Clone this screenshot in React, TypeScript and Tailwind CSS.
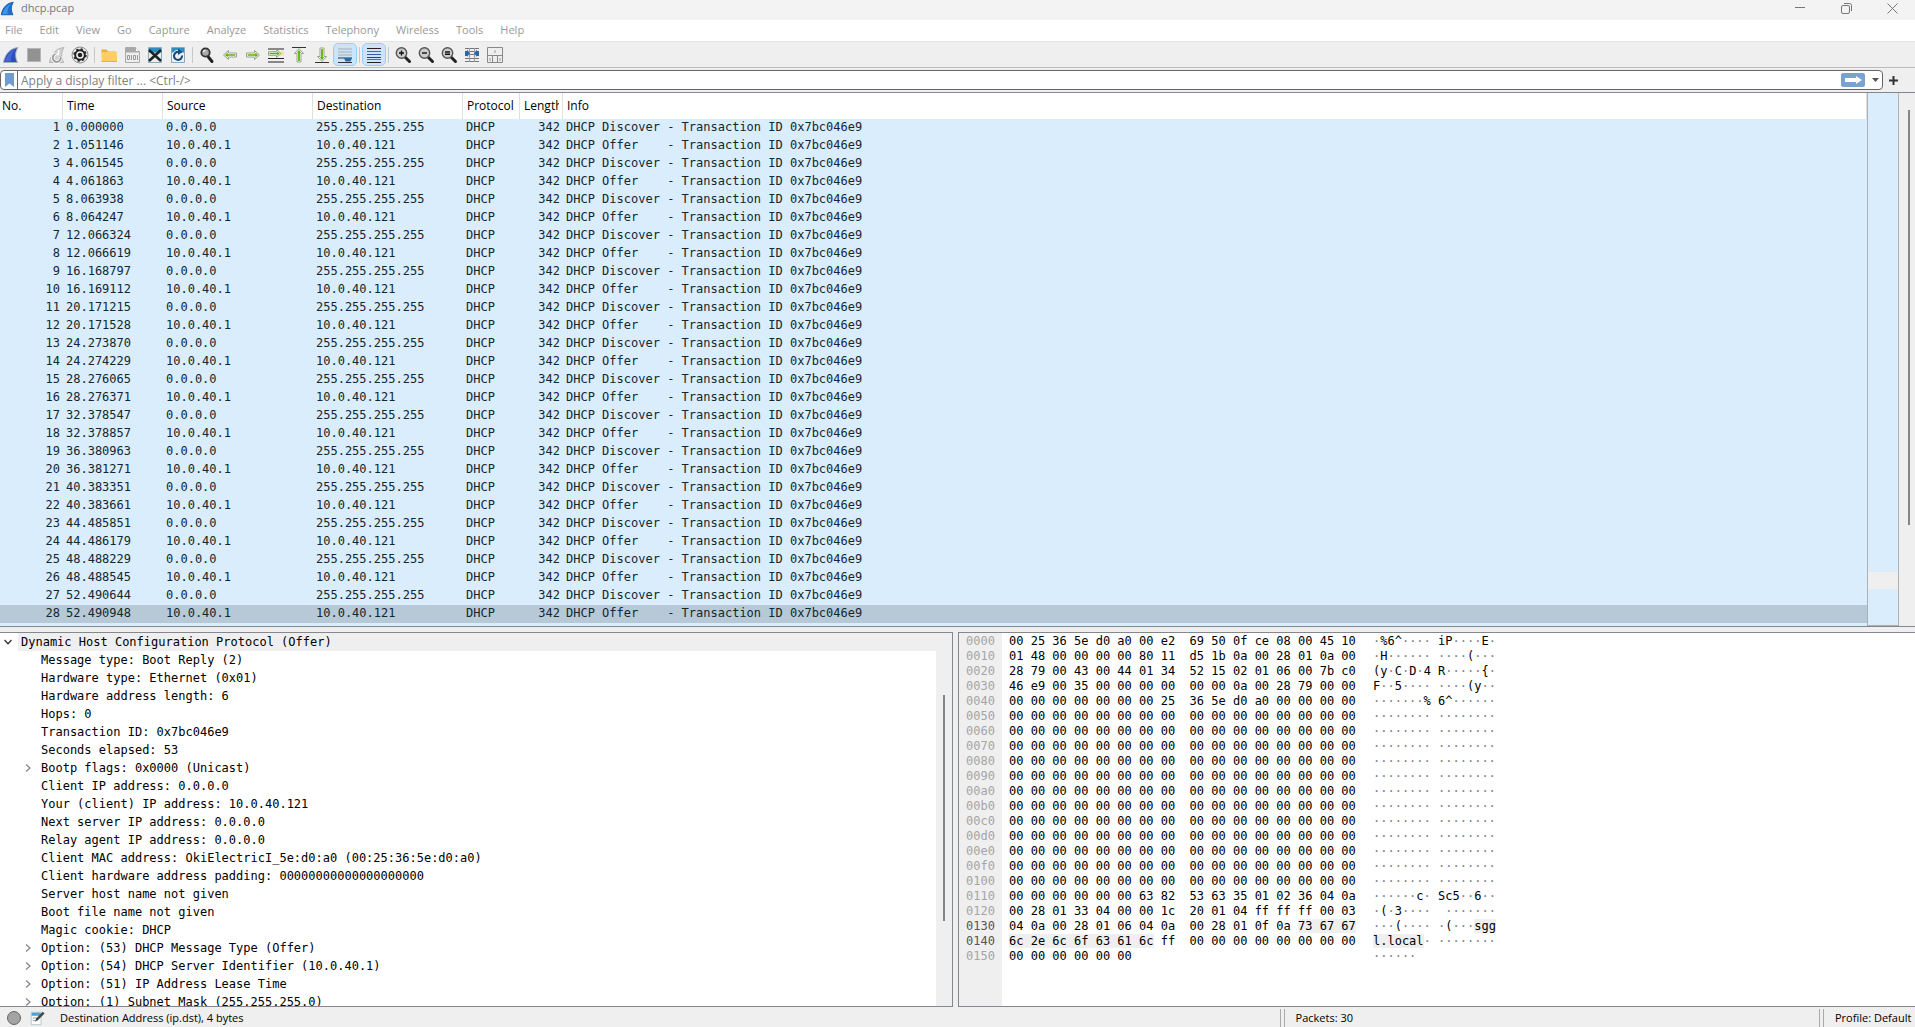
import { Fragment, useState } from "react";

const UI = "font-['Open_Sans','Noto_Sans',sans-serif]";
const MONO = "font-['DejaVu_Sans_Mono','Liberation_Mono',monospace]";

// data -> packets
const times = [
  "0.000000", "1.051146", "4.061545", "4.061863", "8.063938", "8.064247", "12.066324",
  "12.066619", "16.168797", "16.169112", "20.171215", "20.171528", "24.273870", "24.274229",
  "28.276065", "28.276371", "32.378547", "32.378857", "36.380963", "36.381271", "40.383351",
  "40.383661", "44.485851", "44.486179", "48.488229", "48.488545", "52.490644", "52.490948",
];

const packets = times.map((time, i) => {
  const offer = i % 2 === 1;
  return {
    no: i + 1,
    time,
    source: offer ? "10.0.40.1" : "0.0.0.0",
    destination: offer ? "10.0.40.121" : "255.255.255.255",
    protocol: "DHCP",
    length: 342,
    info: `DHCP ${offer ? "Offer   " : "Discover"} - Transaction ID 0x7bc046e9`,
  };
});

// data -> protocol tree
const fields = [
  { text: "Message type: Boot Reply (2)" },
  { text: "Hardware type: Ethernet (0x01)" },
  { text: "Hardware address length: 6" },
  { text: "Hops: 0" },
  { text: "Transaction ID: 0x7bc046e9" },
  { text: "Seconds elapsed: 53" },
  { text: "Bootp flags: 0x0000 (Unicast)", open: true },
  { text: "Client IP address: 0.0.0.0" },
  { text: "Your (client) IP address: 10.0.40.121" },
  { text: "Next server IP address: 0.0.0.0" },
  { text: "Relay agent IP address: 0.0.0.0" },
  { text: "Client MAC address: OkiElectricI_5e:d0:a0 (00:25:36:5e:d0:a0)" },
  { text: "Client hardware address padding: 00000000000000000000" },
  { text: "Server host name not given" },
  { text: "Boot file name not given" },
  { text: "Magic cookie: DHCP" },
  { text: "Option: (53) DHCP Message Type (Offer)", open: true },
  { text: "Option: (54) DHCP Server Identifier (10.0.40.1)", open: true },
  { text: "Option: (51) IP Address Lease Time", open: true },
  { text: "Option: (1) Subnet Mask (255.255.255.0)", open: true },
];

// data -> packet bytes
const zeros = "00 00 00 00 00 00 00 00 00 00 00 00 00 00 00 00";
const dump = [
  "00 25 36 5e d0 a0 00 e2 69 50 0f ce 08 00 45 10",
  "01 48 00 00 00 00 80 11 d5 1b 0a 00 28 01 0a 00",
  "28 79 00 43 00 44 01 34 52 15 02 01 06 00 7b c0",
  "46 e9 00 35 00 00 00 00 00 00 0a 00 28 79 00 00",
  "00 00 00 00 00 00 00 25 36 5e d0 a0 00 00 00 00",
  ...Array(12).fill(zeros),
  "00 00 00 00 00 00 63 82 53 63 35 01 02 36 04 0a",
  "00 28 01 33 04 00 00 1c 20 01 04 ff ff ff 00 03",
  "04 0a 00 28 01 06 04 0a 00 28 01 0f 0a 73 67 67",
  "6c 2e 6c 6f 63 61 6c ff 00 00 00 00 00 00 00 00",
  "00 00 00 00 00 00",
];
const MARK_START = 0x13d;
const MARK_END = 0x146;

// toolbar icons
const Svg = ({ children, size = 18 }: any) => (
  <svg width={size} height={size} viewBox="0 0 18 18" fill="none" aria-hidden="true">
    {children}
  </svg>
);

const Fin = ({ size = 18, light = false }: any) => (
  <Svg size={size}>
    <path d="M1.5 16.500C3 8 8 2.500 16 1.500C13 6 13 11 15.500 16.500Z" fill={light ? "#1b6fd0" : "#2c4fc0"} stroke={light ? "#1658a8" : "#a9aeba"} />
    <path d="M3 15.500C5 9 8.500 5 13 3.500C9.500 7 8.500 12 9 15.500Z" fill={light ? "#3f97e8" : "#4468d8"} />
  </Svg>
);

const Restart = () => (
  <Svg>
    <path d="M1.500 16.500C3 8 8 2.500 16 1.500C13 6 13 11 15.500 16.500Z" fill="#d2d2d2" stroke="#b5b5b5" />
    <path d="M10.500 4v4.500H6.500" stroke="#fff" strokeWidth="1.500" />
    <path d="M7.500 8a4 4 0 1 0 5 2.500" stroke="#fff" strokeWidth="3.500" />
    <path d="M7.500 8a4 4 0 1 0 5 2.500" stroke="#9a9a9a" strokeWidth="1.800" />
  </Svg>
);

const Options = () => (
  <Svg>
    <circle cx="9" cy="9" r="8" fill="#f4f4f4" stroke="#8a8a8a" />
    <circle cx="9" cy="9" r="4.800" stroke="#222" strokeWidth="2" />
    <circle cx="9" cy="9" r="6" stroke="#222" strokeWidth="1.500" strokeDasharray="2.300 2.400" />
    <circle cx="9" cy="9" r="2.300" fill="#222" />
  </Svg>
);

const Folder = () => (
  <Svg>
    <path d="M1.500 3.500h5l1.500 2h7.500v2H1.500z" fill="#e8b23a" />
    <path d="M1.500 6h15.500v9.500H1.500z" fill="#fbcf63" />
    <path d="M1.500 15h15.500v1H1.500z" fill="#e6b244" />
  </Svg>
);

const SaveFile = () => (
  <Svg>
    <path d="M2.500 1.500h10l4 4v11h-14z" fill="#eee" stroke="#aaa" />
    <path d="M3 2h9l4 4.500H3z" fill="#a8a8a8" />
    <path d="M12.500 1.500v4h4" fill="#fff" stroke="#aaa" />
    <path d="M4.500 9.500h2v4h-2zM8.500 9v5M10.500 9.500h2v4h-2zM14.500 9v5" stroke="#999" />
  </Svg>
);

const CloseFile = () => (
  <Svg>
    <path d="M2.500 1.500h13v15h-13z" fill="#e6eef2" stroke="#8aa9ba" />
    <path d="M3 2h12v4.500H3z" fill="#2b8fc4" />
    <path d="M3 4l12 11M15 4L3 15" stroke="#222" strokeWidth="2.600" />
  </Svg>
);

const ReloadFile = () => (
  <Svg>
    <path d="M2.500 1.500h13v15h-13z" fill="#e6eef2" stroke="#8aa9ba" />
    <path d="M3 2h12v4.500H3z" fill="#2b8fc4" />
    <path d="M13 9.500a4 4 0 1 1-3.500-3.500" stroke="#fff" strokeWidth="4" />
    <path d="M13 9.500a4 4 0 1 1-3.500-3.500" stroke="#174a80" strokeWidth="2.200" />
    <path d="M9 2.500l4.500 3.500-4.500 3z" fill="#174a80" />
  </Svg>
);

// sign is drawn inside of the lens
const Lens = ({ sign = "" }: any) => (
  <Svg>
    <path d="M11 11l4.500 4.500" stroke="#222" strokeWidth="3" strokeLinecap="round" />
    <circle cx="7.500" cy="7" r="5.200" fill="#cdcdcd" stroke="#555" strokeWidth="1.400" />
    <path d={sign} stroke="#111" strokeWidth="1.400" />
  </Svg>
);

const Find = () => (
  <Svg>
    <path d="M10 10.500l4 5" stroke="#222" strokeWidth="3" strokeLinecap="round" />
    <circle cx="7.500" cy="6.500" r="4.200" fill="#aaa" stroke="#333" strokeWidth="1.800" />
    <path d="M5.500 6a2 2 0 0 1 2-1.500" stroke="#fff" strokeWidth="1.200" />
  </Svg>
);

const Arrow = ({ turn = "" }: any) => (
  <Svg>
    <path d="M2.500 9l5-4.500v2.500h8v4h-8v2.500z" transform={turn} fill="#fff" stroke="#98a08f" />
    <path d="M4 9l2.700-2.400v1.600h7.600v1.600H6.700v1.600z" transform={turn} fill="#58b400" />
  </Svg>
);

const JumpTo = () => (
  <Svg>
    <path d="M1 3h16M1 12.500h16M1 16h16" stroke="#222" strokeWidth="1.200" />
    <path d="M12 5.500h5v4h-5z" fill="#f5e87a" />
    <path d="M14 7.500l-4.500-4v2.200H1.500v3.600h8v2.200z" fill="#fff" stroke="#98a08f" />
    <path d="M12.600 7.500l-2.400-2.200v1.400H2.500v1.600h7.700v1.400z" fill="#58b400" />
  </Svg>
);

const ToTop = () => (
  <Svg>
    <path d="M2 1.500h14" stroke="#333" />
    <path d="M9 2.500l4.500 5H11v8.500H7V7.500H4.500z" fill="#fff" stroke="#98a08f" />
    <path d="M9 4l2.300 2.700H9.900V15H8.100V6.700H6.700z" fill="#58b400" />
  </Svg>
);

const ToBottom = () => (
  <Svg>
    <path d="M2 16.500h14" stroke="#333" />
    <path d="M9 15.500l4.500-5H11V2H7v8.500H4.500z" fill="#fff" stroke="#98a08f" />
    <path d="M9 14l2.300-2.700H9.900V3H8.100v8.300H6.700z" fill="#58b400" />
  </Svg>
);

const AutoScroll = () => (
  <Svg>
    <path d="M2 3h14M2 6h14M2 9h14" stroke="#a9b0a8" />
    <path d="M2 12h14M2 16.500h14" stroke="#333" />
    <path d="M8 12h8l-1.500 3.500h-5z" fill="#2f66a8" />
  </Svg>
);

const Colorize = () => (
  <Svg>
    <path d="M2 2.500h14M2 16.500h14" stroke="#222" />
    <path d="M2 5.500h14" stroke="#d33" />
    <path d="M2 8.500h14" stroke="#335ea8" />
    <path d="M2 11.500h14" stroke="#3a3f5a" />
    <path d="M2 13.500h14" stroke="#a44a7c" />
  </Svg>
);

const Resize = () => (
  <Svg>
    <path d="M2 2.500h14M6.500 5.500h5M6.500 8.500h5M2 12.500h14M2 15.500h14" stroke="#777" />
    <path d="M6.500 2v14M11.500 2v14" stroke="#999" />
    <path d="M2 5h2V3.500l3 3.700-3 3.800V10H2zM16 5h-2V3.500l-3 3.700 3 3.800V10h2z" fill="#2f66a8" />
  </Svg>
);

const LayoutIcon = () => (
  <Svg>
    <path d="M1.500 1.500h15v15h-15zM1.500 9.500h15M6.500 9.500v7M11.500 9.500v7" stroke="#888" fill="#eee" />
    <path d="M9 4v3M4 12v3M14 12v3" stroke="#999" />
  </Svg>
);

const tools: any[] = [
  { label: "Start capture", icon: <Fin /> },
  { label: "Stop capture", icon: <Svg><path d="M2.500 2.500h13v13h-13z" fill="#929292" stroke="#b5b5b5" /></Svg> },
  { label: "Restart capture", icon: <Restart /> },
  { label: "Capture options", icon: <Options /> },
  null,
  { label: "Open file", icon: <Folder /> },
  { label: "Save file", icon: <SaveFile /> },
  { label: "Close file", icon: <CloseFile /> },
  { label: "Reload file", icon: <ReloadFile /> },
  null,
  { label: "Find packet", icon: <Find /> },
  { label: "Go back", icon: <Arrow /> },
  { label: "Go forward", icon: <Arrow turn="rotate(180 9 9)" /> },
  { label: "Go to packet", icon: <JumpTo /> },
  { label: "First packet", icon: <ToTop /> },
  { label: "Last packet", icon: <ToBottom /> },
  { label: "Auto scroll", icon: <AutoScroll />, on: true },
  null,
  { label: "Colorize", icon: <Colorize />, on: true },
  null,
  { label: "Zoom in", icon: <Lens sign="M5 7h5M7.500 4.500v5" /> },
  { label: "Zoom out", icon: <Lens sign="M5 7h5" /> },
  { label: "Normal size", icon: <Lens sign="M5 6h5M5 8.200h5" /> },
  { label: "Resize columns", icon: <Resize /> },
  { label: "Reset layout", icon: <LayoutIcon /> },
];

const TitleBar = () => (
  <header className="flex h-5 shrink-0 items-center justify-between bg-[#f3f3f3] pb-1">
    <div className="flex items-center gap-1.5">
      <Fin size={15} light />
      <h1 className="text-[11px] leading-4 text-[#777]">dhcp.pcap</h1>
    </div>
    <div className="flex text-[#777]">
      <button aria-label="Minimize" className="flex h-4 w-[46px] items-center justify-center">
        <svg width="10" height="10" viewBox="0 0 10 10" stroke="currentColor"><path d="M0 4.500h10" /></svg>
      </button>
      <button aria-label="Restore" className="flex h-4 w-[46px] items-center justify-center">
        <svg width="11" height="11" viewBox="0 0 11 11" fill="none" stroke="currentColor">
          <rect x=".5" y="2.500" width="8" height="8" rx="1.500" />
          <path d="M3 .5h5.500a2 2 0 0 1 2 2V8" />
        </svg>
      </button>
      <button aria-label="Close" className="flex h-4 w-[46px] items-center justify-center">
        <svg width="11" height="11" viewBox="0 0 11 11" stroke="currentColor"><path d="M.5.5l10 10M10.500.5l-10 10" /></svg>
      </button>
    </div>
  </header>
);

const menus = ["File", "Edit", "View", "Go", "Capture", "Analyze", "Statistics", "Telephony", "Wireless", "Tools", "Help"];

const MenuBar = () => (
  <nav className="flex h-[22px] shrink-0 items-center gap-[17px] border-b border-[#e6e6e6] bg-white pl-[5px] text-[11px] text-[#999]">
    {menus.map((menu) => (
      <button key={menu}>{menu}</button>
    ))}
  </nav>
);

const ToolBar = () => (
  <div role="toolbar" className="flex h-[26px] shrink-0 items-center gap-px border-b border-[#bdbdbd]">
    {tools.map((tool, i) =>
      tool ? (
        <button
          key={i}
          aria-label={tool.label}
          className={`flex h-[21px] w-[22px] items-center justify-center rounded-sm ${
            tool.on ? "bg-[#cce4fb] outline outline-[#99cdf5]" : ""
          }`}
        >
          {tool.icon}
        </button>
      ) : (
        <div key={i} className="flex w-[5px] justify-center">
          <div className="h-4 w-px bg-[#c8c8c8]"></div>
        </div>
      )
    )}
  </div>
);

const FilterBar = () => {
  const [filter, setFilter] = useState("");

  return (
    <div className="flex h-6 shrink-0 items-center">
      <div className="flex h-5 grow items-center rounded-sm border border-[#666] bg-white">
        <button aria-label="Bookmarks" className="flex h-full w-[17px] items-center justify-center border-r border-[#666]">
          <svg width="9" height="14" viewBox="0 0 9 14"><path d="M0 0h9v14L4.500 10.500 0 14z" fill="#6f9bcd" /></svg>
        </button>
        <input
          aria-label="Display filter"
          value={filter}
          onChange={(e) => setFilter(e.target.value)}
          placeholder="Apply a display filter ... <Ctrl-/>"
          className="h-full min-w-0 grow pl-[3px] text-xs outline-none placeholder:text-[#808080]"
        />
        <button aria-label="Apply filter" className="flex h-3.5 w-6 items-center justify-center rounded-xs bg-[#7aa2d0]">
          <svg width="17" height="8" viewBox="0 0 17 8"><path d="M0 2h11V0l6 4-6 4V6H0z" fill="#fff" /></svg>
        </button>
        <button aria-label="Filter history" className="flex w-[17px] justify-center pl-1">
          <svg width="7" height="4" viewBox="0 0 7 4"><path d="M0 0h7L3.500 4z" fill="#555" /></svg>
        </button>
      </div>
      <button aria-label="Add filter button" className="flex w-8 pl-1.5">
        <svg width="9" height="9" viewBox="0 0 9 9" stroke="#333" strokeWidth="2"><path d="M0 4.500h9M4.500 0v9" /></svg>
      </button>
    </div>
  );
};

const headers = ["No.", "Time", "Source", "Destination", "Protocol", "Length", "Info"];

const PacketList = () => {
  const [selected, setSelected] = useState(28);

  return (
    <section className="flex min-h-0 flex-[533] border-y border-[#828790]">
      {/* packets */}
      <div className="min-w-0 grow overflow-hidden bg-[#daedfd]">
        <table className="w-full table-fixed border-separate border-spacing-0">
          <colgroup>
            <col className="w-[63px]" />
            <col className="w-[100px]" />
            <col className="w-[150px]" />
            <col className="w-[150px]" />
            <col className="w-[57px]" />
            <col className="w-[43px]" />
            <col />
          </colgroup>
          <thead>
            <tr className="h-[26px] bg-white text-xs leading-4 text-black">
              {headers.map((header, i) => (
                <th
                  key={header}
                  className={`border-r border-[#e0e0e0] p-0 text-left font-normal ${i === 0 ? "pl-0.5" : "pl-1"}`}
                >
                  <div className="mr-[3px] overflow-hidden">{header}</div>
                </th>
              ))}
            </tr>
          </thead>
          <tbody className={`text-xs leading-4 whitespace-pre text-[#12272e] ${MONO}`}>
            {packets.map((packet) => (
              <tr
                key={packet.no}
                onClick={() => setSelected(packet.no)}
                className={packet.no === selected ? "bg-[#b7c9d7]" : ""}
              >
                <td className="px-[3px] pb-0.5 text-right">{packet.no}</td>
                <td className="px-[3px] pb-0.5">{packet.time}</td>
                <td className="px-[3px] pb-0.5">{packet.source}</td>
                <td className="px-[3px] pb-0.5">{packet.destination}</td>
                <td className="px-[3px] pb-0.5">{packet.protocol}</td>
                <td className="px-[3px] pb-0.5 text-right">{packet.length}</td>
                <td className="px-[3px] pb-0.5">{packet.info}</td>
              </tr>
            ))}
          </tbody>
        </table>
      </div>

      {/* minimap */}
      <div className="flex w-8 shrink-0 flex-col border-x border-b border-[#b0b0b0] bg-[#daedfd]">
        <div className="flex-[479]"></div>
        <div className="flex-[17] bg-[#efefef]"></div>
        <div className="flex-[36]"></div>
      </div>

      {/* scrollbar */}
      <div className="flex w-4 shrink-0 flex-col items-center pl-1">
        <div className="flex-[17]"></div>
        <div className="w-0.5 flex-[415] bg-[#858585]"></div>
        <div className="flex-[101]"></div>
      </div>
    </section>
  );
};

const Chevron = ({ down = false }: any) => (
  <svg width="10" height="10" viewBox="0 0 10 10" fill="none" stroke={down ? "#333" : "#888"} strokeWidth="1.300">
    <path d={down ? "M1.500 3L5 6.800 8.500 3" : "M3 1.500L7 5 3 8.500"} />
  </svg>
);

const PacketDetails = () => (
  <section className="flex min-w-0 flex-[953] overflow-hidden border border-l-0 border-[#828790] bg-white">
    <div className={`min-w-0 grow overflow-hidden text-xs leading-[18px] whitespace-pre text-black ${MONO}`}>
      <div className="flex">
        <button aria-label="Collapse" className="flex w-[18px] shrink-0 items-center pl-[3px]">
          <Chevron down />
        </button>
        <p className="grow bg-[#efefef] pl-[3px]">Dynamic Host Configuration Protocol (Offer)</p>
      </div>
      <ul>
        {fields.map((field) => (
          <li key={field.text} className="flex pl-[23px]">
            <div className="flex w-[18px] shrink-0 items-center">
              {field.open && (
                <button aria-label={`Expand ${field.text}`}>
                  <Chevron />
                </button>
              )}
            </div>
            {field.text}
          </li>
        ))}
      </ul>
    </div>
    <div className="flex w-4 shrink-0 flex-col items-center bg-[#efefef]">
      <div className="flex-[62]"></div>
      <div className="w-0.5 flex-[226] bg-[#858585]"></div>
      <div className="flex-[85]"></div>
    </div>
  </section>
);

// dots stand for bytes that can not be printed
const Dots = ({ text }: any) =>
  text.split(/(·+)/).map((part: string, i: number) => (
    <Fragment key={i}>{part[0] === "·" ? <span className="text-[#808080]">{part}</span> : part}</Fragment>
  ));

const PacketBytes = () => (
  <section className="flex min-w-0 flex-[957] overflow-hidden border border-r-0 border-[#828790] bg-white">
    <div className="grow bg-linear-to-r from-[#efefef] from-[43px] to-white to-[43px] pt-px">
      <table className={`border-collapse text-xs leading-[15px] whitespace-pre text-black ${MONO}`}>
        <tbody>
          {dump.map((row, r) => {
            const bytes = row.split(" ");
            const offset = r * 16;
            const hex = bytes.map((b, i) => (i === 8 ? " " + b : b)).join(" ");
            const ascii = bytes
              .map((b, i) => {
                const code = parseInt(b, 16);
                const char = code >= 0x20 && code < 0x7f ? String.fromCharCode(code) : "·";
                return i === 8 ? " " + char : char;
              })
              .join("");

            // marked part of this row
            const first = Math.max(MARK_START - offset, 0);
            const last = Math.min(MARK_END - offset, 15);
            const marked = first <= last;
            const gap = (i: number) => (i >= 8 ? 1 : 0);
            const h1 = marked ? first * 3 + gap(first) : 0;
            const h2 = marked ? last * 3 + gap(last) + 2 : 0;
            const a1 = marked ? first + gap(first) : 0;
            const a2 = marked ? last + gap(last) + 1 : 0;

            return (
              <tr key={offset} className="h-[15px]">
                <th className={`w-[43px] p-0 pl-[7px] text-left font-normal ${marked ? "text-[#555]" : "text-[#a5a5a5]"}`}>
                  {offset.toString(16).padStart(4, "0")}
                </th>
                <td className="w-[371px] p-0 pl-[7px]">
                  {hex.slice(0, h1)}
                  <span className="bg-[#efefef]">{hex.slice(h1, h2)}</span>
                  {hex.slice(h2)}
                </td>
                <td className="p-0">
                  <Dots text={ascii.slice(0, a1)} />
                  <span className="bg-[#efefef]">{ascii.slice(a1, a2)}</span>
                  <Dots text={ascii.slice(a2)} />
                </td>
              </tr>
            );
          })}
        </tbody>
      </table>
    </div>
  </section>
);

const StatusBar = () => (
  <footer className="flex h-5 shrink-0 items-center pt-0.5 text-[11px] leading-4 whitespace-nowrap text-black">
    <div className="flex flex-[1274] items-center pl-[7px]">
      <button aria-label="Expert information" className="size-3.5 rounded-full border border-[#666] bg-[#a3a3a3]"></button>
      <button aria-label="Capture comment" className="ml-2">
        <Svg size={16}>
          <path d="M2.500 2.500h11v14h-11z" fill="#fff" stroke="#a9c4d2" />
          <path d="M3 3h10v3.500H3z" fill="#4da3d4" />
          <path d="M4 9h5M4 12h4" stroke="#999" />
          <path d="M7 13l1-3.500L15.500 2l2 2L10 11.500z" fill="#444" />
        </Svg>
      </button>
      <p className="ml-[15px]">Destination Address (ip.dst), 4 bytes</p>
    </div>
    <div className="flex flex-[540] items-center">
      <div className="h-[18px] w-[5px] border-x border-[#aaa]"></div>
      <p className="ml-[11px]">Packets: 30</p>
    </div>
    <div className="flex w-24 shrink-0 items-center">
      <div className="h-[18px] w-[5px] border-x border-[#aaa]"></div>
      <p className="ml-[11px]">Profile: Default</p>
    </div>
  </footer>
);

const App = () => {
  return (
    <div className={`flex h-screen flex-col overflow-hidden bg-[#efefef] ${UI}`}>
      <TitleBar />
      <MenuBar />
      <ToolBar />
      <FilterBar />

      {/* panes */}
      <main className="flex min-h-0 grow flex-col gap-[5px]">
        <PacketList />
        <div className="flex min-h-0 flex-[375] gap-[5px]">
          <PacketDetails />
          <PacketBytes />
        </div>
      </main>

      <StatusBar />
    </div>
  );
};

export default App;
